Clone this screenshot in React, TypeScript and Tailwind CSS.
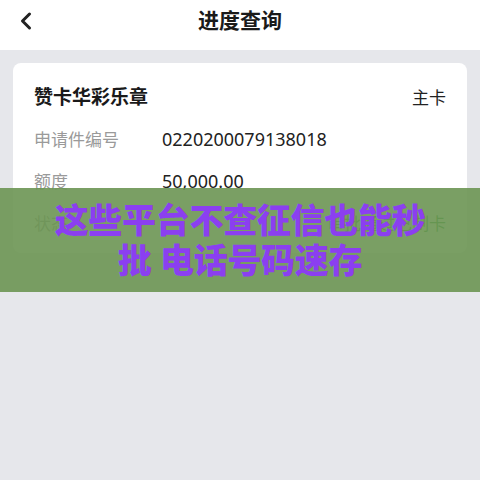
import { ChevronLeft } from 'lucide-react';

const rows = [
  { label: '申请件编号', value: '0220200079138018', green: false },
  { label: '额度', value: '50,000.00', green: false },
  { label: '状态', value: '审批通过已制卡', green: true },
];

export default function App() {
  return (
    <div
      className="relative w-[480px] h-[480px] overflow-hidden bg-[#e6e7eb]"
      style={{ fontFamily: '"Noto Sans", "Noto Sans CJK SC", sans-serif' }}
    >
      {/* Header */}
      <div className="relative h-[50px] bg-white flex items-center justify-center">
        <ChevronLeft className="absolute left-[12px] top-[7px] w-[28px] h-[28px] text-[#222]" strokeWidth={2.6} />
        <h1 className="text-[21px] font-bold text-[#1a1a1a] -mt-[8px]">进度查询</h1>
      </div>

      {/* Card */}
      <div className="mx-[13px] mt-[13px] bg-white rounded-[8px] px-[21px] pt-[20px] pb-[14px]">
        <div className="flex items-center justify-between">
          <span className="text-[19px] font-bold text-[#1a1a1a]">赞卡华彩乐章</span>
          <span className="text-[17px] text-[#222]">主卡</span>
        </div>
        <div className="mt-[13px] flex flex-col gap-[12px]">
          {rows.map((r) => (
            <div key={r.label} className="flex items-center h-[30px]">
              <span className="w-[128px] text-[17px] text-[#9a9a9a]">{r.label}</span>
              <span className={r.green ? 'ml-auto text-[17px] text-[#2c9a3c]' : 'text-[18px] text-[#222]'}>
                {r.value}
              </span>
            </div>
          ))}
        </div>
      </div>

      {/* Overlay banner */}
      <div className="absolute left-0 right-0 top-[188px] h-[104px] bg-[#6c9553]/90 flex items-center justify-center">
        <p className="text-center text-[34px] leading-[40px] font-black text-[#8b3ff0] px-[50px] tracking-[-0.3px] -mt-[1px]">
          这些平台不查征信也能秒批 电话号码速存
        </p>
      </div>
    </div>
  );
}
